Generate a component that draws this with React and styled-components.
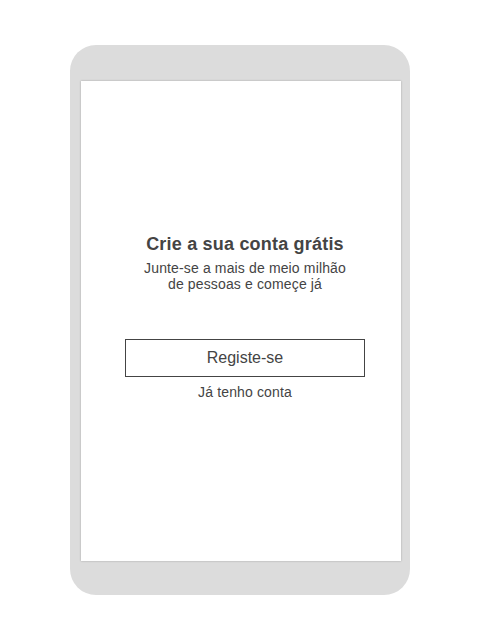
import React from 'react';
import styled, { createGlobalStyle } from "styled-components";

const Global = createGlobalStyle`
  body {
    margin: 0;
    background: #ffffff;
    font-family: "Liberation Sans", Arial, sans-serif;
  }
`;

const Page = styled.div`
  width: 480px;
  height: 640px;
  display: flex;
  justify-content: center;
  padding-top: 45px;
  box-sizing: border-box;
`;

const Device = styled.div`
  width: 340px;
  height: 550px;
  background: #dcdcdc;
  border-radius: 26px;
  padding: 36px 9px 34px 11px;
  box-sizing: border-box;
`;

const Screen = styled.div`
  width: 320px;
  height: 480px;
  background: #ffffff;
  box-shadow: 0 0 2px rgba(0, 0, 0, 0.25);
  display: flex;
  flex-direction: column;
  align-items: center;
  padding: 152px 0 0 8px;
  box-sizing: border-box;
  color: #444444;
`;

const Title = styled.h1`
  margin: 0;
  font-size: 18px;
  line-height: 22px;
  font-weight: bold;
  letter-spacing: 0.2px;
  color: #444444;
`;

const Subtitle = styled.p`
  margin: 5px 0 0;
  font-size: 14px;
  line-height: 16px;
  letter-spacing: 0.14px;
  text-align: center;
  color: #444444;
`;

const Button = styled.button`
  margin-top: 47px;
  width: 240px;
  height: 38px;
  background: #ffffff;
  border: 1px solid #444444;
  font-family: "Liberation Sans", Arial, sans-serif;
  font-size: 16px;
  color: #444444;
  cursor: pointer;
`;

const Link = styled.a`
  margin-top: 7px;
  font-size: 14px;
  line-height: 16px;
  letter-spacing: 0.14px;
  color: #444444;
  text-decoration: none;
  cursor: pointer;
`;

const App = () => {
  return (
    <Page>
      <Global />
      <Device>
        <Screen>
          <Title>Crie a sua conta grátis</Title>
          <Subtitle>
            Junte-se a mais de meio milhão <br /> de pessoas e começe já
          </Subtitle>
          <Button>Registe-se</Button>
          <Link>Já tenho conta</Link>
        </Screen>
      </Device>
    </Page>
  );
};

export default App;
